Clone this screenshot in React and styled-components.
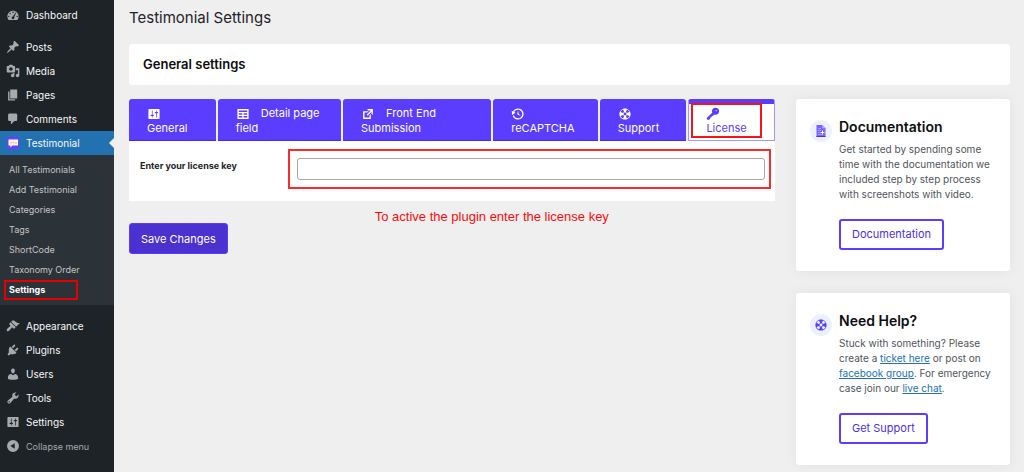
import React, { useState } from 'react';
import styled, { createGlobalStyle, css } from 'styled-components';

const GlobalStyle = createGlobalStyle`
  * {
    box-sizing: border-box;
  }
  body {
    margin: 0;
    background: #efefef;
    color: #1d2327;
    font-family: Inter, 'Liberation Sans', sans-serif;
    font-size: 11px;
  }
`;

const Layout = styled.div`
  display: flex;
  min-height: 100vh;
`;

const Sidebar = styled.nav`
  flex: 0 0 114px;
  padding-top: 3px;
  background: #1d2327;
`;

const MenuList = styled.ul`
  list-style: none;
  margin: 0;
  padding: 0;
`;

const MenuItem = styled.li`
  margin-top: ${props => props.$gap || 0}px;
`;

const menuRow = css`
  position: relative;
  display: flex;
  align-items: center;
  gap: 6px;
  width: 100%;
  height: 24px;
  padding: 0 0 0 6px;
  font-family: inherit;
  font-size: 10px;
  font-weight: 400;
  text-decoration: none;
`;

const MenuLink = styled.a`
  ${menuRow}
  color: #f8f8f9;
  background: ${props => (props.$active ? '#2271b1' : 'transparent')};

  svg {
    color: #a7aaad;
  }

  ${props => props.$active && css`
    &::after {
      content: '';
      position: absolute;
      right: 0;
      top: 7px;
      border: 5px solid transparent;
      border-right-color: #efefef;
      border-left-width: 0;
    }
  `}
`;

const CollapseButton = styled.button`
  ${menuRow}
  border: 0;
  background: none;
  color: #a7aaad;
  font-size: 9px;
  cursor: pointer;
`;

const SubMenu = styled.ul`
  list-style: none;
  margin: 0;
  padding: 5px 0 5px 4px;
  background: #2c3338;
`;

const SubLink = styled.a`
  display: block;
  width: 74px;
  height: 20px;
  padding-left: ${props => (props.$current ? 3 : 5)}px;
  border: ${props => (props.$current ? '2px solid #e60000' : '0')};
  color: ${props => (props.$current ? '#fff' : '#c3c4c7')};
  font-size: 9px;
  font-weight: ${props => (props.$current ? 700 : 400)};
  line-height: ${props => (props.$current ? 16 : 20)}px;
  text-decoration: none;
  white-space: nowrap;
`;

const Page = styled.main`
  flex: 1;
  min-width: 0;
  padding: 8px 14px 7px 15px;
`;

const PageTitle = styled.h1`
  margin: 0;
  font-size: 15px;
  font-weight: 400;
  line-height: 20px;
`;

const SectionHeader = styled.header`
  margin-top: 16px;
  padding: 10px 14px 11px;
  border-radius: 3px;
  background: #fff;

  h2 {
    margin: 0;
    color: #0c0d0e;
    font-size: 13px;
    font-weight: 600;
    line-height: 20px;
  }
`;

const Columns = styled.div`
  display: flex;
  gap: 21px;
  margin-top: 14px;
`;

const SettingsForm = styled.form`
  flex: 1;
  min-width: 0;
`;

const Tabs = styled.div`
  display: flex;
  gap: 2px;
`;

const Tab = styled.button`
  position: relative;
  flex: ${props => props.$grow} 1 0;
  min-width: 0;
  height: 42px;
  padding: 7px 18px;
  border: 0;
  border-bottom: 1px solid #4a2be4;
  border-radius: 3px 3px 0 0;
  background: #5b3dff;
  color: #fff;
  font-family: inherit;
  font-size: 11px;
  line-height: 14px;
  text-align: left;
  cursor: pointer;

  svg {
    margin-right: 8px;
    vertical-align: middle;
  }

  ${props => props.$active && css`
    border: 1px solid #a494ff;
    border-top: 5px solid #5b3dff;
    padding: 2px 17px 7px;
    background: #fff;
    color: #5b3dff;
  `}
`;

const TabMark = styled.span`
  position: absolute;
  inset: -1px 12px 2px 2px;
  border: 2px solid #f81414;
`;

const Panel = styled.div`
  display: flex;
  padding: 8px 4px 12px 11px;
  background: #fff;
`;

const FieldLabel = styled.label`
  flex: 0 0 148px;
  padding-top: 9px;
  font-size: 9px;
  font-weight: 700;
  line-height: 16px;
`;

const FieldMark = styled.div`
  flex: 1;
  padding: 7px 4px 7px 7px;
  border: 2px solid #fb2b2b;
`;

const TextInput = styled.input`
  display: block;
  width: 100%;
  height: 22px;
  padding: 0 6px;
  border: 1px solid #a5a7aa;
  border-radius: 3px;
  background: #fff;
  font-family: inherit;
  font-size: 11px;
`;

const FormFooter = styled.div`
  display: flex;
  align-items: flex-start;
  gap: 147px;
`;

const SaveButton = styled.button`
  height: 31px;
  margin-top: 22px;
  padding: 0 11px;
  border: 1px solid #5b3dff;
  border-radius: 3px;
  background: #4b31cf;
  color: #fff;
  font-family: inherit;
  font-size: 11px;
  white-space: nowrap;
  cursor: pointer;
`;

const Note = styled.p`
  margin: 8px 0 0;
  color: #fa0d0d;
  font-family: 'Liberation Sans', Arial, sans-serif;
  font-size: 13px;
  line-height: 16px;
`;

const Aside = styled.aside`
  display: flex;
  flex-direction: column;
  flex: 0 0 214px;
  gap: 22px;
`;

const Card = styled.section`
  display: flex;
  gap: 7px;
  padding: 18px 14px 21px;
  border-radius: 3px;
  background: #fff;
  box-shadow: 0 0 14px rgba(0, 0, 0, 0.06);
`;

const CardIcon = styled.div`
  display: flex;
  flex: 0 0 22px;
  align-items: center;
  justify-content: center;
  height: 22px;
  margin-top: 3px;
  border-radius: 50%;
  background: #ecf0ff;
  color: #5b3dff;
`;

const CardTitle = styled.h3`
  margin: 0 0 5px;
  color: #0c0d0e;
  font-size: 14px;
  font-weight: 600;
  line-height: 20px;
`;

const CardText = styled.p`
  margin: 0 0 17px;
  color: #50545a;
  font-size: 10px;
  line-height: 15px;
  white-space: nowrap;

  a {
    color: #2271b1;
  }
`;

const CardButton = styled.a`
  display: inline-block;
  height: 31px;
  padding: 0 11px;
  border: 2px solid #5b3dff;
  border-radius: 3px;
  color: #4b31e0;
  font-size: 11px;
  line-height: 27px;
  text-decoration: none;
  vertical-align: top;
`;

const paths = {
  dashboard: 'M3.76 17h12.48C17.34 15.63 18 13.89 18 12c0-4.41-3.58-8-8-8s-8 3.59-8 8c0 1.89.66 3.63 1.76 5zM9 6a1 1 0 1 1 2 0a1 1 0 1 1-2 0zM5 8a1 1 0 1 1 2 0a1 1 0 1 1-2 0zM3 12a1 1 0 1 1 2 0a1 1 0 1 1-2 0zM15 12a1 1 0 1 1 2 0a1 1 0 1 1-2 0zM14.4 6.9l-2.6 6.1c.2.3.2.6.2 1 0 1.1-.9 2-2 2s-2-.9-2-2c0-1 .7-1.8 1.7-2l4-5.5z',
  post: 'M10.44 3.02l1.82-1.82 6.36 6.35-1.83 1.82c-1.05-.68-2.48-.57-3.41.36l-.75.75c-.92.93-1.04 2.35-.35 3.41l-1.83 1.82-2.41-2.41-2.8 2.79c-.42.42-3.38 2.71-3.8 2.29s1.86-3.39 2.28-3.81l2.79-2.79L4.1 9.36l1.83-1.82c1.05.69 2.48.57 3.4-.36l.75-.75c.93-.92 1.05-2.35.36-3.41z',
  media: 'M13 11V4c0-.55-.45-1-1-1h-1.67L9 1H5L3.67 3H2c-.55 0-1 .45-1 1v7c0 .55.45 1 1 1h10c.55 0 1-.45 1-1zM7 4.5c1.38 0 2.5 1.12 2.5 2.5S8.38 9.5 7 9.5 4.5 8.38 4.5 7 5.62 4.5 7 4.5zM14 6h5v10.5c0 1.38-1.12 2.5-2.5 2.5S14 17.88 14 16.5s1.12-2.5 2.5-2.5c.17 0 .34.02.5.05V9h-3V6zm-4 8.05V13h2v3.5c0 1.38-1.12 2.5-2.5 2.5S7 17.88 7 16.5 8.12 14 9.5 14c.17 0 .34.02.5.05z',
  page: 'M6 15V2h10v13H6zm-1 1h8v2H3V5h2v11z',
  comments: 'M5 2h9c1.1 0 2 .9 2 2v7c0 1.1-.9 2-2 2h-2l-5 5v-5H5c-1.1 0-2-.9-2-2V4c0-1.1.9-2 2-2z',
  appearance: 'M14.48 11.06L7.41 3.99l1.5-1.5c.5-.56 2.3-.47 3.51.32 1.21.8 1.43 1.28 2.91 2.1 1.18.64 2.45 1.26 4.45.85zm-.71.71L6.7 4.7 4.93 6.47c-.39.39-.39 1.02 0 1.41l1.06 1.06c.39.39.39 1.03 0 1.42-.6.6-1.43 1.11-2.21 1.69-.35.26-.7.53-1.01.84C1.43 14.23.4 16.08 1.4 17.07c.99 1 2.84-.03 4.18-1.36.31-.31.58-.66.85-1.02.57-.78 1.08-1.61 1.69-2.21.39-.39 1.02-.39 1.41 0l1.06 1.06c.39.39 1.02.39 1.41 0z',
  plugins: 'M13.11 4.36L9.87 7.6 8 5.73l3.24-3.24c.35-.34 1.05-.2 1.56.32.52.51.66 1.21.31 1.55zm-8 1.77l.91-1.12 9.01 9.01-1.19.84c-.71.71-2.63 1.16-3.82 1.16H6.14L4.9 17.26c-.59.59-1.54.59-2.12 0-.59-.58-.59-1.53 0-2.12l1.24-1.24v-3.88c0-1.13.4-3.19 1.09-3.89zm7.26 3.97l3.24-3.24c.34-.35 1.04-.21 1.55.31.52.51.66 1.21.31 1.55l-3.24 3.25z',
  users: 'M10 9.25c-2.27 0-2.73-3.44-2.73-3.44C7 4.02 7.82 2 9.97 2c2.16 0 2.98 2.02 2.71 3.81 0 0-.41 3.44-2.68 3.44zm0 2.57L12.72 10c2.39 0 4.52 2.33 4.52 4.53v2.49s-3.65 1.13-7.24 1.13c-3.65 0-7.24-1.13-7.24-1.13v-2.49c0-2.25 1.94-4.48 4.47-4.48z',
  tools: 'M16.68 9.77c-1.34 1.34-3.3 1.67-4.95.99l-5.41 6.52c-.99.99-2.59.99-3.58 0s-.99-2.59 0-3.57l6.52-5.42c-.68-1.65-.35-3.61.99-4.95 1.28-1.28 3.12-1.62 4.72-1.06l-2.89 2.89 2.82 2.82 2.86-2.87c.53 1.58.18 3.39-1.08 4.65zM3.81 16.21c.4.39 1.04.39 1.43 0 .4-.4.4-1.04 0-1.43-.39-.4-1.03-.4-1.43 0-.39.39-.39 1.03 0 1.43z',
  settings: 'M18 16V4c0-.55-.45-1-1-1H3c-.55 0-1 .45-1 1v12c0 .55.45 1 1 1h14c.55 0 1-.45 1-1zM8 11h1c.55 0 1 .45 1 1s-.45 1-1 1H8v1.5c0 .28-.22.5-.5.5s-.5-.22-.5-.5V13H6c-.55 0-1-.45-1-1s.45-1 1-1h1V5.5c0-.28.22-.5.5-.5s.5.22.5.5V11zm5-2h-1c-.55 0-1-.45-1-1s.45-1 1-1h1V5.5c0-.28.22-.5.5-.5s.5.22.5.5V7h1c.55 0 1 .45 1 1s-.45 1-1 1h-1v5.5c0 .28-.22.5-.5.5s-.5-.22-.5-.5V9z',
  collapse: 'M10 1.5a8.5 8.5 0 1 1 0 17a8.5 8.5 0 1 1 0-17zM12.5 14V6L6.2 10z',
  table: 'M18 17V3H2v14h16zM16 7H4V5h12v2zm-7 4H4V9h5v2zm7 0h-5V9h5v2zm-7 4H4v-2h5v2zm7 0h-5v-2h5v2z',
  external: 'M9 3h8v8l-2-1V6.92l-5.6 5.59-1.41-1.41L14.08 5H10zm3 12v-3l2-2v7H3V6h8L9 8H5v7h7z',
  backup: 'M13.65 2.88c3.93 2.01 5.48 6.84 3.47 10.77s-6.83 5.48-10.77 3.47c-1.87-.96-3.2-2.56-3.86-4.4l1.64-1.03c.45 1.57 1.52 2.95 3.08 3.76 3.01 1.54 6.69.35 8.23-2.66 1.55-3.01.36-6.69-2.65-8.24C9.78 3.01 6.1 4.2 4.56 7.21l1.88.97-4.95 3.08-.39-5.82 1.78.91C4.9 2.4 9.75.89 13.65 2.88zm-4.36 7.83C9.11 10.53 9 10.28 9 10c0-.07.03-.12.04-.19h-.01L10 5l.97 4.81L14 13l-4.5-2.12.02-.02c-.08-.04-.16-.09-.23-.15z',
  sos: 'M18 10c0-4.42-3.58-8-8-8s-8 3.58-8 8 3.58 8 8 8 8-3.58 8-8zM7.23 3.57L8.72 7.3c-.62.29-1.13.8-1.42 1.42L3.57 7.23c.71-1.64 2.02-2.95 3.66-3.66zm9.2 3.66L12.7 8.72c-.29-.62-.8-1.13-1.42-1.42l1.49-3.73c1.64.71 2.95 2.02 3.66 3.66zM10 12c-1.1 0-2-.9-2-2s.9-2 2-2 2 .9 2 2-.9 2-2 2zm-6.43.77l3.73-1.49c.29.62.8 1.13 1.42 1.42l-1.49 3.73c-1.64-.71-2.95-2.02-3.66-3.66zm9.2 3.66l-1.49-3.73c.62-.29 1.13-.8 1.42-1.42l3.73 1.49c-.71 1.64-2.02 2.95-3.66 3.66z',
  key: 'M17.3 2.6c2 2 2 5.2 0 7.2-1.5 1.5-3.8 1.8-5.6 1l-1.4 1.6-1.9.3-.4 1.9-1.8.4-.4 1.8-1.5 1.4H1.6l-.6-2.6 7.9-7.4c-.9-1.8-.6-4.1 1-5.6 2-2 5.4-2 7.4 0zM14.6 6a.8.8 0 1 0 0-1.6a.8.8 0 1 0 0 1.6z',
};

function Icon({ name, size = 14 }) {
  return (
    <svg width={size} height={size} viewBox="0 0 20 20" fill="currentColor" fillRule="evenodd" aria-hidden="true">
      <path d={paths[name]} />
    </svg>
  );
}

function TestimonialIcon() {
  return (
    <svg width="14" height="14" viewBox="0 0 14 14" aria-hidden="true">
      <rect x="1" y="1" width="12" height="12" rx="1" fill="#6a3dff" />
      <path d="M2.5 3.5h9.5v6H6.5L4.5 11.5v-2h-2z" fill="#fff" />
      <path d="M4 6h2v1.5H4zM6.5 6h2v1.5h-2zM9 6h2v1.5H9z" fill="#ffc48a" />
    </svg>
  );
}

function DocumentIcon() {
  return (
    <svg width="12" height="14" viewBox="0 0 12 14" aria-hidden="true">
      <path d="M1.5 1h5.8L10.5 4.2V13h-9z" fill="#7a62ff" />
      <path d="M7.3 1v3.2h3.2z" fill="#b9adff" />
      <path d="M3 4.5h3M3 6.5h3M3 8.5h2M3 10.5h4" stroke="#a99bff" fill="none" />
      <path d="M7.5 6.5v4M5.5 8.5h4" stroke="#fff" fill="none" />
      <path d="M1.5 12.5h9" stroke="#4b31e0" fill="none" />
    </svg>
  );
}

const menu = [
  { label: 'Dashboard', icon: 'dashboard' },
  { label: 'Posts', icon: 'post', gap: 8 },
  { label: 'Media', icon: 'media' },
  { label: 'Pages', icon: 'page' },
  { label: 'Comments', icon: 'comments' },
  {
    label: 'Testimonial',
    active: true,
    children: ['All Testimonials', 'Add Testimonial', 'Categories', 'Tags', 'ShortCode', 'Taxonomy Order', 'Settings'],
  },
  { label: 'Appearance', icon: 'appearance', gap: 9 },
  { label: 'Plugins', icon: 'plugins' },
  { label: 'Users', icon: 'users' },
  { label: 'Tools', icon: 'tools' },
  { label: 'Settings', icon: 'settings' },
];

// grow is the share of the row left after the tab paddings
const tabs = [
  { label: 'General', icon: 'settings', grow: 51 },
  { label: 'Detail page field', icon: 'table', grow: 88 },
  { label: 'Front End Submission', icon: 'external', grow: 113 },
  { label: 'reCAPTCHA', icon: 'backup', grow: 69 },
  { label: 'Support', icon: 'sos', grow: 51 },
  { label: 'License', icon: 'key', grow: 51, marked: true },
];

export default function App() {
  const [activeTab, setActiveTab] = useState('License');
  const [licenseKey, setLicenseKey] = useState('');

  return (
    <Layout>
      <GlobalStyle />
      <Sidebar>
        <MenuList>
          {menu.map(item => (
            <MenuItem key={item.label} $gap={item.gap}>
              <MenuLink href="#" $active={item.active}>
                {item.icon ? <Icon name={item.icon} /> : <TestimonialIcon />}
                {item.label}
              </MenuLink>
              {item.children && (
                <SubMenu>
                  {item.children.map(child => (
                    <li key={child}>
                      <SubLink href="#" $current={child === 'Settings'}>{child}</SubLink>
                    </li>
                  ))}
                </SubMenu>
              )}
            </MenuItem>
          ))}
          <MenuItem>
            <CollapseButton type="button">
              <Icon name="collapse" />
              Collapse menu
            </CollapseButton>
          </MenuItem>
        </MenuList>
      </Sidebar>

      <Page>
        <PageTitle>Testimonial Settings</PageTitle>
        <SectionHeader>
          <h2>General settings</h2>
        </SectionHeader>

        <Columns>
          <SettingsForm onSubmit={e => e.preventDefault()}>
            <Tabs role="tablist">
              {tabs.map(tab => (
                <Tab
                  key={tab.label}
                  type="button"
                  role="tab"
                  aria-selected={tab.label === activeTab}
                  $grow={tab.grow}
                  $active={tab.label === activeTab}
                  onClick={() => setActiveTab(tab.label)}
                >
                  <Icon name={tab.icon} /> {tab.label}
                  {tab.marked && <TabMark />}
                </Tab>
              ))}
            </Tabs>
            <Panel>
              <FieldLabel htmlFor="license-key">Enter your license key</FieldLabel>
              <FieldMark>
                <TextInput
                  id="license-key"
                  type="text"
                  value={licenseKey}
                  onChange={e => setLicenseKey(e.target.value)}
                />
              </FieldMark>
            </Panel>
            <FormFooter>
              <SaveButton type="submit">Save Changes</SaveButton>
              <Note>To active the plugin enter the license key</Note>
            </FormFooter>
          </SettingsForm>

          <Aside>
            <Card>
              <CardIcon><DocumentIcon /></CardIcon>
              <div>
                <CardTitle>Documentation</CardTitle>
                <CardText>
                  Get started by spending some<br />
                  time with the documentation we<br />
                  included step by step process<br />
                  with screenshots with video.
                </CardText>
                <CardButton href="#">Documentation</CardButton>
              </div>
            </Card>
            <Card>
              <CardIcon><Icon name="sos" /></CardIcon>
              <div>
                <CardTitle>Need Help?</CardTitle>
                <CardText>
                  Stuck with something? Please<br />
                  create a <a href="#">ticket here</a> or post on<br />
                  <a href="#">facebook group</a>. For emergency<br />
                  case join our <a href="#">live chat</a>.
                </CardText>
                <CardButton href="#">Get Support</CardButton>
              </div>
            </Card>
          </Aside>
        </Columns>
      </Page>
    </Layout>
  );
}
